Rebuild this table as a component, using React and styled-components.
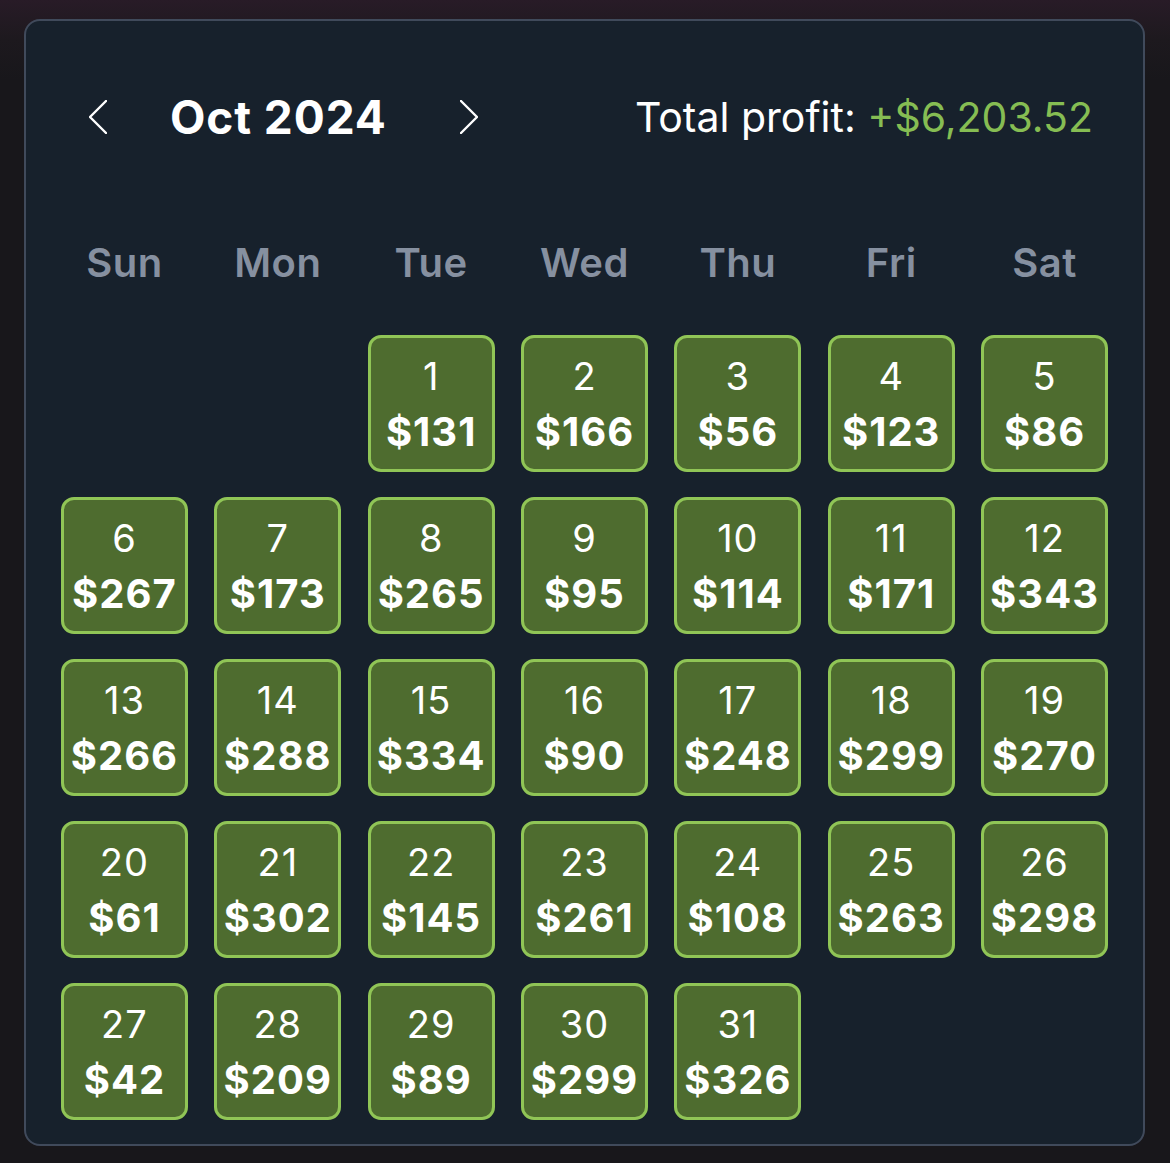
import styled, { createGlobalStyle } from "styled-components";

const GlobalStyle = createGlobalStyle`
  html, body {
    margin: 0;
    padding: 0;
    background: #18171b;
  }
  body {
    min-height: 1163px;
    background: linear-gradient(180deg, #281b27 0px, #1d191e 40px, #18171b 80px);
    font-family: Inter, "Noto Sans", "Liberation Sans", sans-serif;
    -webkit-font-smoothing: antialiased;
  }
`;

const profits = [
  131, 166, 56, 123, 86, 267, 173, 265, 95, 114, 171, 343, 266, 288, 334, 90,
  248, 299, 270, 61, 302, 145, 261, 108, 263, 298, 42, 209, 89, 299, 326,
];

const weekdays = ["Sun", "Mon", "Tue", "Wed", "Thu", "Fri", "Sat"];

function Chevron({ dir }) {
  const pts = dir === "left" ? "17,1 1,17 17,33" : "1,1 17,17 1,33";
  return (
    <svg width="18" height="34" viewBox="0 0 18 34">
      <polyline points={pts} fill="none" stroke="#ffffff" strokeWidth="2.4" strokeLinecap="round" strokeLinejoin="round" />
    </svg>
  );
}

function App() {
  return (
    <>
      <GlobalStyle />
      <Card>
        <Header>
          <NavButton>
            <Chevron dir="left" />
          </NavButton>
          <MonthTitle>Oct 2024</MonthTitle>
          <NavButton>
            <Chevron dir="right" />
          </NavButton>
          <Total>
            Total profit: <Profit>+$6,203.52</Profit>
          </Total>
        </Header>
        <WeekRow>
          {weekdays.map((d) => (
            <WeekDay key={d}>{d}</WeekDay>
          ))}
        </WeekRow>
        <Grid>
          {profits.map((p, i) => (
            <DayCell key={i} $start={i === 0 ? 3 : undefined}>
              <DayNum>{i + 1}</DayNum>
              <Amount>${p}</Amount>
            </DayCell>
          ))}
        </Grid>
      </Card>
    </>
  );
}

export default App;

const Card = styled.div`
  box-sizing: border-box;
  width: 1121px;
  margin: 19px 0 0 24px;
  padding: 0 35px 24px;
  background: #17212c;
  border: 2px solid #404a5b;
  border-radius: 16px;
`;

const Header = styled.div`
  height: 192px;
  display: flex;
  align-items: center;
  padding: 0 15px 0 28px;
`;

const NavButton = styled.div`
  display: flex;
  align-items: center;
  width: 18px;
  height: 34px;
`;

const MonthTitle = styled.div`
  width: 353px;
  padding-left: 63px;
  box-sizing: border-box;
  font-size: 46px;
  font-weight: 700;
  color: #ffffff;
  letter-spacing: 0.9px;
`;

const Total = styled.div`
  margin-left: auto;
  font-size: 41px;
  font-weight: 400;
  color: #ffffff;
`;

const Profit = styled.span`
  color: #86bd53;
`;

const WeekRow = styled.div`
  height: 98px;
  display: grid;
  grid-template-columns: repeat(7, 1fr);
  column-gap: 26.5px;
  align-items: center;
  margin-bottom: 24px;
`;

const WeekDay = styled.div`
  text-align: center;
  font-size: 40px;
  font-weight: 600;
  color: #8690a0;
  letter-spacing: 0.5px;
`;

const Grid = styled.div`
  display: grid;
  grid-template-columns: repeat(7, 1fr);
  grid-auto-rows: 137px;
  column-gap: 26.5px;
  row-gap: 25px;
`;

const DayCell = styled.div`
  box-sizing: border-box;
  grid-column-start: ${(p) => p.$start || "auto"};
  background: #4e6c2f;
  border: 3px solid #90c556;
  border-radius: 13px;
  display: flex;
  flex-direction: column;
  align-items: center;
  color: #ffffff;
  padding-top: 13px;
`;

const DayNum = styled.div`
  font-size: 38px;
  font-weight: 400;
  line-height: 50px;
  letter-spacing: 1px;
`;

const Amount = styled.div`
  font-size: 40px;
  font-weight: 700;
  line-height: 62px;
  letter-spacing: 1px;
  white-space: nowrap;
`;
